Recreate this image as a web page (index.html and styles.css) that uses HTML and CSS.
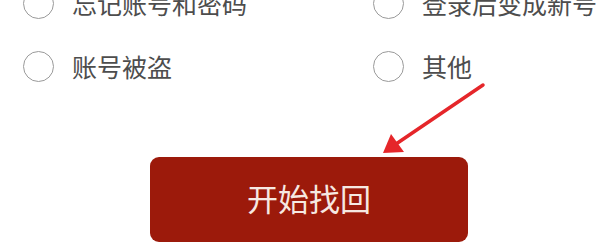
FILE: index.html
```html
<!DOCTYPE html>
<html lang="zh-CN">
<head>
<meta charset="utf-8">
<link rel="stylesheet" href="styles.css">
</head>
<body>
<div class="page">
  <div class="options">
    <label class="opt"><span class="radio"></span><span class="txt">忘记账号和密码</span></label>
    <label class="opt"><span class="radio"></span><span class="txt">登录后变成新号</span></label>
    <label class="opt"><span class="radio"></span><span class="txt">账号被盗</span></label>
    <label class="opt"><span class="radio"></span><span class="txt">其他</span></label>
  </div>
  <div class="btn-row">
    <button class="btn">开始找回</button>
  </div>
  <svg class="arrow" width="596" height="244" viewBox="0 0 596 244">
    <line x1="483" y1="85" x2="396" y2="144" stroke="#e5262a" stroke-width="3.5" stroke-linecap="round"/>
    <polygon points="383,153 391,134 404,152" fill="#e5262a"/>
  </svg>
</div>
</body>
</html>
```
FILE: styles.css
```css
html, body {
  margin: 0;
  padding: 0;
  background: #ffffff;
}
.page {
  position: relative;
  width: 596px;
  height: 244px;
  overflow: hidden;
  font-family: "Noto Sans CJK SC", "Noto Sans", sans-serif;
}
.options {
  display: grid;
  grid-template-columns: 350px 1fr;
  row-gap: 23px;
  margin-top: -17px;
  padding-left: 23px;
}
.opt {
  display: flex;
  align-items: center;
  height: 40px;
  white-space: nowrap;
}
.radio {
  box-sizing: border-box;
  width: 31px;
  height: 31px;
  border: 1.6px solid #9a9a9a;
  border-radius: 50%;
  flex: none;
}
.txt {
  margin-left: 18px;
  font-size: 25px;
  color: #4d4d4d;
  line-height: 1;
}
.btn-row {
  margin-top: 71px;
  padding-left: 150px;
}
.btn {
  display: block;
  width: 318px;
  height: 85px;
  border: none;
  border-radius: 9px;
  background: #9c1a0b;
  color: #f6e8e2;
  font-family: "Noto Sans CJK SC", "Noto Sans", sans-serif;
  font-size: 31px;
  padding: 0 0 4px 0;
}
.arrow {
  position: absolute;
  left: 0;
  top: 0;
  pointer-events: none;
}
```
